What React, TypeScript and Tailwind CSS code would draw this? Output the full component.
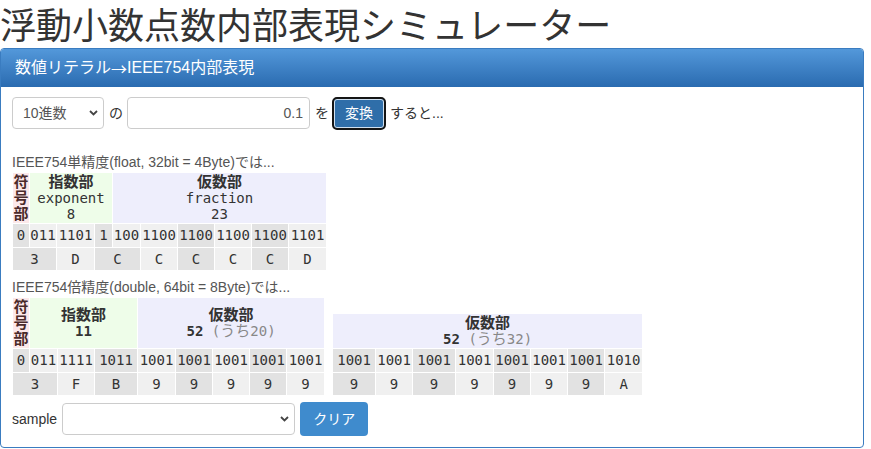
import React from "react";

type Cell = [string, number, boolean];

const SANS = "font-['Liberation_Sans','Noto_Sans_CJK_JP',sans-serif]";
const MONO = "font-['DejaVu_Sans_Mono','Noto_Sans_CJK_JP',monospace]";

const Chevron = () => (
  <svg
    className="pointer-events-none absolute right-[6px] top-1/2 -translate-y-1/2"
    width="9"
    height="6"
    viewBox="0 0 9 6"
  >
    <path d="M1 1l3.5 3.5L8 1" fill="none" stroke="#444" strokeWidth="1.8" />
  </svg>
);

const BitTable = ({
  cols,
  head,
  bits,
  hex,
}: {
  cols: number[];
  head: React.ReactNode;
  bits: Cell[];
  hex: Cell[];
}) => {
  const width = cols.reduce((a, b) => a + b, 0) + cols.length + 1;
  return (
    <table
      className={`table-fixed border-separate border-spacing-[1px] ${MONO}`}
      style={{ width }}
    >
      <colgroup>
        {cols.map((w, i) => (
          <col key={i} style={{ width: w }} />
        ))}
      </colgroup>
      <thead>{head}</thead>
      <tbody>
        <tr className="h-[23px] text-[14px] text-[#333]">
          {bits.map(([t, span, dark], i) => (
            <td
              key={i}
              colSpan={span}
              className={`p-0 text-center whitespace-nowrap ${dark ? "bg-[#e2e2e2]" : "bg-[#f0f0f0]"}`}
            >
              {t}
            </td>
          ))}
        </tr>
        <tr className="h-[22px] text-[14px] text-[#333]">
          {hex.map(([t, span, dark], i) => (
            <td
              key={i}
              colSpan={span}
              className={`p-0 text-center ${dark ? "bg-[#e2e2e2]" : "bg-[#f0f0f0]"}`}
            >
              {t}
            </td>
          ))}
        </tr>
      </tbody>
    </table>
  );
};

const Sign = () => (
  <th className="bg-[#fce8ea] p-0 align-middle text-[15px] font-bold leading-[16px] text-[#4a2a2a]">
    <span className={`${SANS} block`}>符<br />号<br />部</span>
  </th>
);

const Title = ({ children }: { children: React.ReactNode }) => (
  <div className={`${SANS} text-[15px] font-bold leading-[16px] text-[#333]`}>
    {children}
  </div>
);

const Uchi = ({ n }: { n: string }) => (
  <span className="font-normal text-[#888]">
    {" "}(<span className={`${SANS} text-[15px]`}>うち</span>
    {n})
  </span>
);

const L = true;
const D = false;

export default function App() {
  const single = {
    cols: [16, 26, 37, 17, 27, 36, 36, 36, 36, 37],
    bits: [
      ["0", 1, L], ["011", 1, D], ["1101", 1, D], ["1", 1, L], ["100", 1, D],
      ["1100", 1, D], ["1100", 1, L], ["1100", 1, D], ["1100", 1, L], ["1101", 1, D],
    ] as Cell[],
    hex: [
      ["3", 2, L], ["D", 1, D], ["C", 2, L], ["C", 1, D], ["C", 1, L],
      ["C", 1, D], ["C", 1, L], ["D", 1, D],
    ] as Cell[],
  };
  const dbl = {
    cols: [16, 27, 36, 42, 37, 36, 36, 36, 37],
    bits: [
      ["0", 1, L], ["011", 1, D], ["1111", 1, D], ["1011", 1, L], ["1001", 1, D],
      ["1001", 1, L], ["1001", 1, D], ["1001", 1, L], ["1001", 1, D],
    ] as Cell[],
    hex: [
      ["3", 2, L], ["F", 1, D], ["B", 1, L], ["9", 1, D], ["9", 1, L],
      ["9", 1, D], ["9", 1, L], ["9", 1, D],
    ] as Cell[],
  };
  const low = {
    cols: [42, 36, 42, 37, 36, 36, 36, 37],
    bits: [
      ["1001", 1, L], ["1001", 1, D], ["1001", 1, L], ["1001", 1, D],
      ["1001", 1, L], ["1001", 1, D], ["1001", 1, L], ["1010", 1, D],
    ] as Cell[],
    hex: [
      ["9", 1, L], ["9", 1, D], ["9", 1, L], ["9", 1, D],
      ["9", 1, L], ["9", 1, D], ["9", 1, L], ["A", 1, D],
    ] as Cell[],
  };

  return (
    <div className={`${SANS} min-h-[449px] bg-white text-[14px] text-[#333]`}>
      <h1 className="mb-[2px] text-[36px] leading-[46px] font-normal text-[#333] font-['Noto_Sans_CJK_JP',sans-serif]">
        浮動小数点数内部表現シミュレーター
      </h1>

      <div className="w-[864px] overflow-hidden rounded-[4px] border border-[#3a7cc0]">
        <div className="flex h-[38px] items-center bg-gradient-to-b from-[#5398da] to-[#2a6bb0] px-[14px] text-[16px] text-white">
          数値リテラル<span className="font-['Noto_Sans_CJK_JP',sans-serif]">→</span>IEEE754内部表現
        </div>

        <div className="px-[11px] pt-[10px] pb-[11px]">
          <div className="flex h-[32px] items-center">
            <div className="relative">
              <select className="h-[32px] w-[92px] appearance-none rounded-[4px] border border-[#ccc] bg-white pl-[10px] text-[14px] text-[#555]">
                <option>10進数</option>
              </select>
              <Chevron />
            </div>
            <span className="ml-[5px]">の</span>
            <input
              readOnly
              value="0.1"
              className="ml-[4px] h-[32px] w-[183px] rounded-[4px] border border-[#ccc] px-[6px] text-right text-[14px] text-[#555]"
            />
            <span className="ml-[5px]">を</span>
            <button className="ml-[3px] h-[33px] w-[54px] rounded-[5px] border-2 border-[#151515] bg-[#2f6ea9] text-[14px] text-white shadow-[inset_0_0_0_1px_#cfe0f0]">
              変換
            </button>
            <span className="ml-[4px]">すると...</span>
          </div>

          <div className="mt-[23px] h-[20px] leading-[20px] text-[#555]">
            IEEE754単精度(float, 32bit = 4Byte)では...
          </div>
          <BitTable
            cols={single.cols}
            bits={single.bits}
            hex={single.hex}
            head={
              <tr className="h-[50px] text-[14px] text-[#333]">
                <Sign />
                <th colSpan={3} className="bg-[#eefde9] p-0 align-middle font-normal leading-[16px]">
                  <Title>指数部</Title>
                  <div>exponent</div>
                  <div>8</div>
                </th>
                <th colSpan={6} className="bg-[#eeeefc] p-0 align-middle font-normal leading-[16px]">
                  <Title>仮数部</Title>
                  <div>fraction</div>
                  <div>23</div>
                </th>
              </tr>
            }
          />

          <div className="mt-[6px] h-[20px] leading-[20px] text-[#555]">
            IEEE754倍精度(double, 64bit = 8Byte)では...
          </div>
          <div className="flex items-end gap-[7px]">
            <BitTable
              cols={dbl.cols}
              bits={dbl.bits}
              hex={dbl.hex}
              head={
                <tr className="h-[50px] text-[14px] text-[#333]">
                  <Sign />
                  <th colSpan={3} className="bg-[#eefde9] p-0 align-middle font-bold leading-[16px]">
                    <Title>指数部</Title>
                    <div>11</div>
                  </th>
                  <th colSpan={5} className="bg-[#eeeefc] p-0 align-middle font-bold leading-[16px]">
                    <Title>仮数部</Title>
                    <div>
                      52<Uchi n="20" />
                    </div>
                  </th>
                </tr>
              }
            />
            <BitTable
              cols={low.cols}
              bits={low.bits}
              hex={low.hex}
              head={
                <tr className="h-[34px] text-[14px] text-[#333]">
                  <th colSpan={8} className="bg-[#eeeefc] p-0 align-middle font-bold leading-[16px]">
                    <Title>仮数部</Title>
                    <div>
                      52<Uchi n="32" />
                    </div>
                  </th>
                </tr>
              }
            />
          </div>

          <div className="mt-[6px] flex h-[34px] items-center">
            <span className="mr-[5px]">sample</span>
            <div className="relative">
              <select className="h-[32px] w-[233px] appearance-none rounded-[4px] border border-[#ccc] bg-white text-[14px]">
                <option></option>
              </select>
              <Chevron />
            </div>
            <button className="ml-[5px] h-[34px] w-[68px] rounded-[4px] bg-[#3f8bcd] text-[14px] text-white">
              クリア
            </button>
          </div>
        </div>
      </div>
    </div>
  );
}
